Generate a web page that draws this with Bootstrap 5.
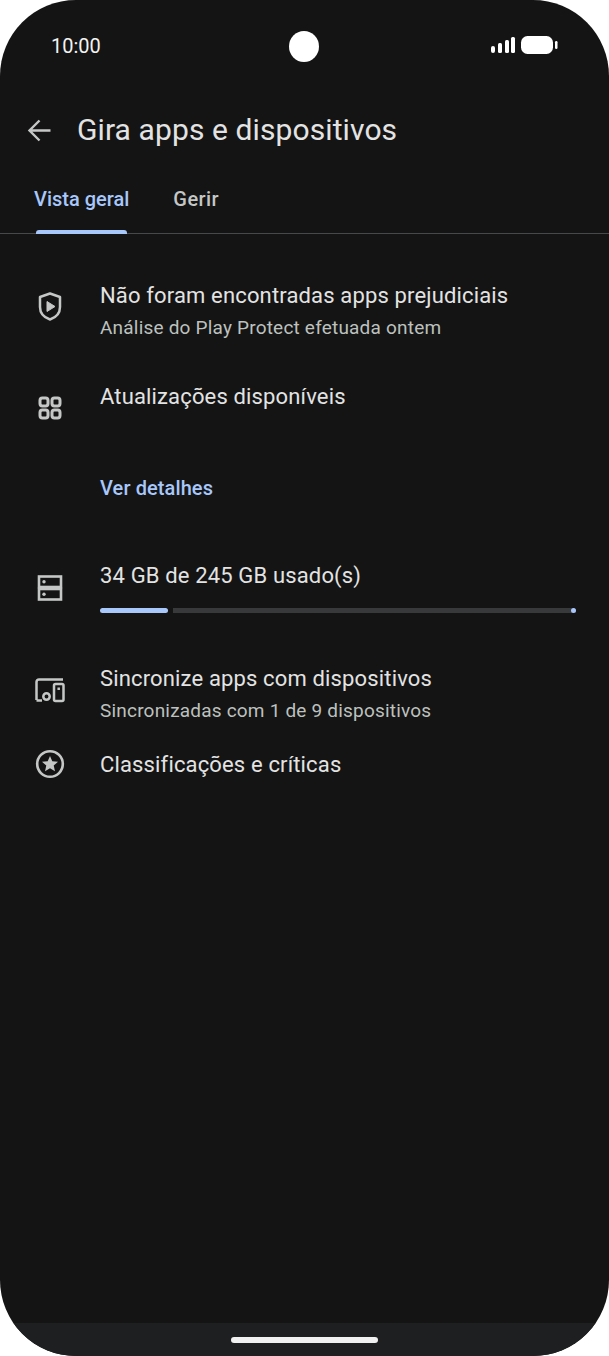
<!DOCTYPE html>
<html lang="pt">
<head>
  <meta charset="UTF-8">
  <title>Gira apps e dispositivos</title>
  <meta name="viewport" content="width=device-width, initial-scale=1">
  <link href="https://cdn.jsdelivr.net/npm/bootstrap@5.3.0/dist/css/bootstrap.min.css" rel="stylesheet">
  <style>
    html, body { height: 100%; }
    body {
      background: #fff;
      font-family: Roboto, "Liberation Sans", sans-serif;
      overflow: hidden;
    }
    .ecra {
      width: 609px;
      height: 1356px;
      background: #141414;
      border-radius: 76px;
      overflow: hidden;
      color: #e3e3e3;
    }
    .estado {
      height: 92px;
      padding: 0 51px;
      position: relative;
    }
    .hora { font-size: 20px; color: #f2f2f2; }
    .camara {
      position: absolute;
      left: 289px;
      top: 31px;
      width: 30px;
      height: 31px;
      border-radius: 50%;
      background: #fff;
    }
    .topo { height: 76px; padding-left: 27px; }
    .titulo { font-size: 30px; font-weight: 400; margin: 0 0 0 25px; color: #e3e3e3; letter-spacing: .1px; }
    .abas { height: 66px; border-bottom: 1px solid #47484a; padding-left: 34px; }
    .aba { font-size: 20px; font-weight: 500; color: #c4c7c5; position: relative; padding: 16px 0 0; letter-spacing: .4px; }
    .aba-ativa { color: #a8c7fa; margin-right: 44px; letter-spacing: 0; }
    .aba-ativa::after {
      content: "";
      position: absolute;
      left: 2px;
      right: 2px;
      top: 62px;
      height: 4px;
      border-radius: 3px 3px 0 0;
      background: #a8c7fa;
    }
    .lista { padding: 45px 33px 0 34px; }
    .linha { gap: 34px; }
    .ico { width: 32px; flex: none; color: #c4c7c5; }
    .ico svg { display: block; width: 32px; height: 32px; }
    .ico-escudo { padding-top: 11px; }
    .ico-grelha { padding-top: 12px; }
    .ico-disco { padding-top: 13px; }
    .ico-sync { padding-top: 12px; }
    .ico-estrela { margin-top: -1px; }
    .nome { font-size: 22px; line-height: 34px; color: #e3e3e3; letter-spacing: .15px; }
    .sub { font-size: 19px; line-height: 30px; color: #bdc1bf; letter-spacing: .2px; }
    .ver { font-size: 20px; font-weight: 500; color: #a8c7fa; line-height: 30px; padding-left: 66px; margin: 49px 0 56px; letter-spacing: .1px; }
    .barra { gap: 5px; margin-top: 15px; align-items: center; position: relative; }
    .barra-uso { width: 68px; height: 5px; border-radius: 3px; background: #a8c7fa; }
    .barra-resto { flex: 1; height: 5px; border-radius: 0 3px 3px 0; background: #38393b; }
    .barra-ponto { position: absolute; right: 0; width: 5px; height: 5px; border-radius: 50%; background: #a8c7fa; }
    .sep-sync { margin-top: 49px; }
    .sep-notas { margin-top: 22px; }
    .sep-grelha { margin-top: 37px; }
    .rodape { height: 33px; background: #1e1f21; flex: none; }
    .pega { width: 147px; height: 6px; border-radius: 3px; background: #f1f1f1; margin-top: 14px; }
  </style>
</head>
<body>
  <div class="ecra d-flex flex-column">
    <!-- barra de estado -->
    <div class="estado d-flex align-items-center justify-content-between">
      <span class="hora">10:00</span>
      <span class="camara"></span>
      <svg width="68" height="20" viewBox="0 0 68 20" fill="#fff">
        <rect x="1" y="10" width="4" height="7" rx="2"/>
        <rect x="8" y="7" width="4" height="10" rx="1.5"/>
        <rect x="15" y="4" width="4" height="13" rx="1.5"/>
        <rect x="21" y="1" width="4" height="16" rx="1.5"/>
        <rect x="31" y="0" width="32" height="18" rx="6.5"/>
        <rect x="65" y="5" width="2.5" height="8" rx="1.2"/>
      </svg>
    </div>
    <div class="flex-grow-1">
      <div class="topo d-flex align-items-center">
        <svg width="25" height="25" viewBox="0 0 25 25" fill="none" stroke="#c4c7c5" stroke-width="2.4">
          <path d="M23.5 12.5H3M12.5 2.5 2.5 12.5l10 10"/>
        </svg>
        <h1 class="titulo">Gira apps e dispositivos</h1>
      </div>

      <!-- separadores -->
      <div class="abas d-flex">
        <div class="aba aba-ativa">Vista geral</div>
        <div class="aba">Gerir</div>
      </div>

      <div class="lista">
        <div class="linha d-flex">
          <div class="ico ico-escudo">
            <svg viewBox="0 0 32 32" fill="none" stroke="currentColor" stroke-width="2.5" stroke-linejoin="round">
              <path d="M16 3.5 26 7v10c0 6-4 10.500-10 12.500C10 27.500 6 23 6 17V7z"/>
              <path d="M13 11.500 21 16.500 13 21.500z" fill="currentColor" stroke-width="1"/>
            </svg>
          </div>
          <div>
            <div class="nome">Não foram encontradas apps prejudiciais</div>
            <div class="sub">Análise do Play Protect efetuada ontem</div>
          </div>
        </div>

        <div class="linha d-flex sep-grelha">
          <div class="ico ico-grelha">
            <svg viewBox="0 0 32 32" fill="none" stroke="currentColor" stroke-width="3">
              <rect x="6" y="6" width="8" height="8" rx="2.400"/>
              <rect x="18" y="6" width="8" height="8" rx="2.400"/>
              <rect x="6" y="18" width="8" height="8" rx="2.400"/>
              <rect x="18" y="18" width="8" height="8" rx="2.400"/>
            </svg>
          </div>
          <div class="nome">Atualizações disponíveis</div>
        </div>

        <div class="ver">Ver detalhes</div>

        <div class="linha d-flex">
          <div class="ico ico-disco">
            <svg viewBox="0 0 32 32" fill="none" stroke="currentColor" stroke-width="2.600">
              <rect x="5" y="4.500" width="22" height="10.500"/>
              <rect x="5" y="17" width="22" height="10.500"/>
              <circle cx="10" cy="9.800" r="1.700" fill="currentColor" stroke="none"/>
              <circle cx="10" cy="22.300" r="1.700" fill="currentColor" stroke="none"/>
            </svg>
          </div>
          <div class="flex-grow-1">
            <div class="nome">34 GB de 245 GB usado(s)</div>
            <div class="barra d-flex">
              <div class="barra-uso"></div>
              <div class="barra-resto"></div>
              <div class="barra-ponto"></div>
            </div>
          </div>
        </div>

        <div class="linha d-flex sep-sync">
          <div class="ico ico-sync">
            <svg viewBox="0 0 32 32" fill="none" stroke="currentColor" stroke-width="2.500" stroke-linejoin="round">
              <path d="M29 5.500H5a2.500 2.500 0 0 0-2.500 2.500v18"/>
              <path d="M2.500 26.500H8"/>
              <circle cx="12.500" cy="22.500" r="3.200"/>
              <rect x="20" y="10" width="9.500" height="17" rx="1.500"/>
              <path d="M24.700 13.500v2.500"/>
            </svg>
          </div>
          <div>
            <div class="nome">Sincronize apps com dispositivos</div>
            <div class="sub">Sincronizadas com 1 de 9 dispositivos</div>
          </div>
        </div>

        <div class="linha d-flex sep-notas">
          <div class="ico ico-estrela">
            <svg viewBox="0 0 32 32" fill="none" stroke="currentColor" stroke-width="2.600">
              <circle cx="16" cy="17" r="12.800"/>
              <path d="M16 9l2.300 5.300 5.700.5-4.300 3.800 1.300 5.600L16 21.300l-5 2.900 1.300-5.600L8 14.800l5.700-.5z" fill="currentColor" stroke="none"/>
            </svg>
          </div>
          <div class="nome">Classificações e críticas</div>
        </div>
      </div>
    </div>

    <!-- barra de navegação -->
    <div class="rodape d-flex justify-content-center">
      <div class="pega"></div>
    </div>
  </div>
  <script src="https://cdn.jsdelivr.net/npm/bootstrap@5.3.0/dist/js/bootstrap.bundle.min.js"></script>
</body>
</html>
